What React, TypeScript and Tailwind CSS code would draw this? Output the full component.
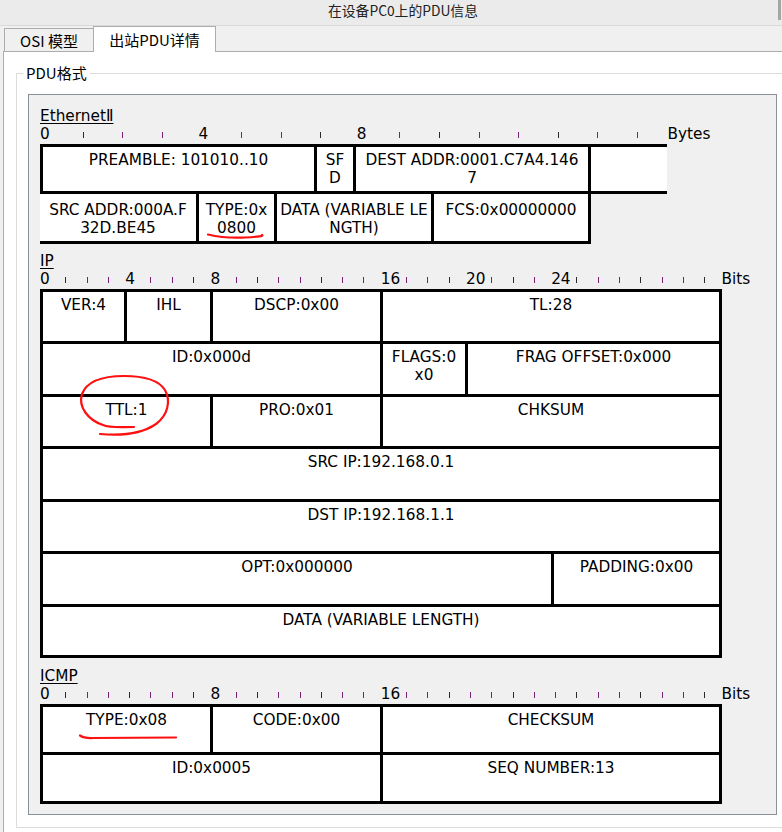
type Cell = { w: string; lines: string[] };
type Row = { h: string; cells: Cell[] };

const ethRow1: Cell[] = [
  { w: 'w-[277px] border-l-[3px] border-r-[3px]', lines: ['PREAMBLE: 101010..10'] },
  { w: 'w-[39px] border-r-[3px]', lines: ['SF', 'D'] },
  { w: 'w-[235px] border-r-[3px]', lines: ['DEST ADDR:0001.C7A4.146', '7'] },
  { w: 'w-[76px]', lines: [] },
];

const ethRow2: Cell[] = [
  { w: 'w-[159px]', lines: ['SRC ADDR:000A.F', '32D.BE45'] },
  { w: 'w-[78px]', lines: ['TYPE:0x', '0800'] },
  { w: 'w-[157px]', lines: ['DATA (VARIABLE LE', 'NGTH)'] },
  { w: 'w-[157px]', lines: ['FCS:0x00000000'] },
];

const ipRows: Row[] = [
  {
    h: 'h-[52px]',
    cells: [
      { w: 'w-[84px]', lines: ['VER:4'] },
      { w: 'w-[86px]', lines: ['IHL'] },
      { w: 'w-[170px]', lines: ['DSCP:0x00'] },
      { w: 'w-[339px]', lines: ['TL:28'] },
    ],
  },
  {
    h: 'h-[53px]',
    cells: [
      { w: 'w-[340px]', lines: ['ID:0x000d'] },
      { w: 'w-[85px]', lines: ['FLAGS:0', 'x0'] },
      { w: 'w-[254px]', lines: ['FRAG OFFSET:0x000'] },
    ],
  },
  {
    h: 'h-[52px]',
    cells: [
      { w: 'w-[170px]', lines: ['TTL:1'] },
      { w: 'w-[170px]', lines: ['PRO:0x01'] },
      { w: 'w-[339px]', lines: ['CHKSUM'] },
    ],
  },
  { h: 'h-[53px]', cells: [{ w: 'w-[679px]', lines: ['SRC IP:192.168.0.1'] }] },
  { h: 'h-[52px]', cells: [{ w: 'w-[679px]', lines: ['DST IP:192.168.1.1'] }] },
  {
    h: 'h-[53px]',
    cells: [
      { w: 'w-[511px]', lines: ['OPT:0x000000'] },
      { w: 'w-[168px]', lines: ['PADDING:0x00'] },
    ],
  },
  { h: 'h-[51px]', cells: [{ w: 'w-[679px]', lines: ['DATA (VARIABLE LENGTH)'] }] },
];

const icmpRows: Row[] = [
  {
    h: 'h-[48px]',
    cells: [
      { w: 'w-[170px]', lines: ['TYPE:0x08'] },
      { w: 'w-[170px]', lines: ['CODE:0x00'] },
      { w: 'w-[339px]', lines: ['CHECKSUM'] },
    ],
  },
  {
    h: 'h-[49px]',
    cells: [
      { w: 'w-[340px]', lines: ['ID:0x0005'] },
      { w: 'w-[339px]', lines: ['SEQ NUMBER:13'] },
    ],
  },
];

function Lines({ lines }: { lines: string[] }) {
  return (
    <>
      {lines.map((l, i) => (
        <div key={i} className="whitespace-nowrap">
          {l}
        </div>
      ))}
    </>
  );
}

function Ruler({
  count,
  cellW,
  tickPad,
  labels,
  unit,
  unitShift = '',
}: {
  count: number;
  cellW: string;
  tickPad: string;
  labels: Record<number, string>;
  unit: string;
  unitShift?: string;
}) {
  return (
    <div className="flex h-[19px] leading-[18px]">
      {Array.from({ length: count }).map((_, i) => (
        <div key={i} className={`${cellW} flex shrink-0 items-end pb-[6px]`}>
          {labels[i] !== undefined ? (
            <span className="self-start whitespace-nowrap">{labels[i]}</span>
          ) : (
            <span className={tickPad}>
              <span
                className={`block h-[6px] w-px ${i % 3 === 1 ? 'bg-[#2a2a2a]' : 'bg-[#7a1f7a]'}`}
              />
            </span>
          )}
        </div>
      ))}
      <span className={`whitespace-nowrap ${unitShift}`}>{unit}</span>
    </div>
  );
}

function Table({ rows }: { rows: Row[] }) {
  return (
    <div className="w-[682px] border-l-[3px] border-t-[3px] border-black bg-white">
      {rows.map((row, r) => (
        <div key={r} className={`flex ${row.h}`}>
          {row.cells.map((c, i) => (
            <div
              key={i}
              className={`${c.w} shrink-0 border-b-[3px] border-r-[3px] border-black pt-[4px] text-center`}
            >
              <Lines lines={c.lines} />
            </div>
          ))}
        </div>
      ))}
    </div>
  );
}

function SectionLabel({ text }: { text: string }) {
  return (
    <div className="h-[18px] leading-[18px]">
      <span className="underline decoration-1 underline-offset-[2px]">{text}</span>
    </div>
  );
}

export default function App() {
  return (
    <div className="relative h-[832px] w-[782px] overflow-hidden bg-[#f0f0f0] text-black">
      {/* Title bar */}
      <div className="flex h-[26px] justify-center border-b border-[#d9d9d9] bg-[#ebebeb] pl-[24px] font-['Noto_Sans_CJK_SC',sans-serif] text-[13.8px] leading-[20px] text-[#222]">
        <span>在设备PC0上的PDU信息</span>
      </div>
      <div className="absolute right-[1px] top-0 h-[20px] w-[3px] bg-[#a6a6a6]" />

      {/* Tabs */}
      <div className="flex h-[25px] items-end pl-[4px] font-['Noto_Sans_CJK_SC',sans-serif] text-[15px] leading-[18px]">
        <div className="flex h-[23px] w-[90px] items-center justify-center border border-b-0 border-[#adadad] bg-[#f0f0f0] pt-[1px]">
          OSI 模型
        </div>
        <div className="relative z-10 -mb-px -ml-px flex h-[26px] w-[123px] items-center justify-center border border-b-0 border-[#adadad] bg-white">
          出站PDU详情
        </div>
      </div>

      {/* Panel */}
      <div className="ml-[3px] h-[781px] border-l border-t border-[#adadad] bg-white">
        <div className="relative ml-[12px] mt-[21px] h-[755px] border border-r-0 border-[#dcdcdc]">
          <div className="absolute -top-[10px] left-[6px] bg-white px-[3px] font-['Noto_Sans_CJK_SC',sans-serif] text-[15px] leading-[18px]">
            PDU格式
          </div>

          <div className="ml-[11px] mt-[20px] h-[721px] w-[749px] border border-[#8a9097] bg-[#f0f0f0] pl-[11px] pt-[12px] font-['DejaVu_Sans',sans-serif] text-[15.3px] leading-[18px]">
            {/* Ethernet II */}
            <SectionLabel text="EthernetⅡ" />
            <Ruler
              count={16}
              cellW="w-[39.6px]"
              tickPad="pl-[3px]"
              labels={{ 0: '0', 4: '4', 8: '8' }}
              unit="Bytes"
              unitShift="-ml-[6px]"
            />
            <div className="flex h-[50px] w-[627px] border-y-[3px] border-black bg-white">
              {ethRow1.map((c, i) => (
                <div key={i} className={`${c.w} shrink-0 border-black pt-[4px] text-center`}>
                  <Lines lines={c.lines} />
                </div>
              ))}
            </div>
            <div className="flex h-[50px] w-[551px] border-b-[3px] border-black bg-white">
              {ethRow2.map((c, i) => (
                <div
                  key={i}
                  className={`${c.w} shrink-0 border-r-[3px] border-black pt-[7px] text-center`}
                >
                  <Lines lines={c.lines} />
                </div>
              ))}
            </div>

            {/* IP */}
            <div className="mt-[8px]">
              <SectionLabel text="IP" />
              <Ruler
                count={32}
                cellW="w-[21.3px]"
                tickPad="pl-[4px]"
                labels={{ 0: '0', 4: '4', 8: '8', 16: '16', 20: '20', 24: '24' }}
                unit="Bits"
              />
              <Table rows={ipRows} />
            </div>

            {/* ICMP */}
            <div className="mt-[9px]">
              <SectionLabel text="ICMP" />
              <Ruler
                count={32}
                cellW="w-[21.3px]"
                tickPad="pl-[4px]"
                labels={{ 0: '0', 8: '8', 16: '16' }}
                unit="Bits"
              />
              <Table rows={icmpRows} />
            </div>
          </div>
        </div>
      </div>

      {/* Red pen marks */}
      <svg
        className="pointer-events-none absolute left-0 top-0"
        width="782"
        height="832"
        viewBox="0 0 782 832"
        fill="none"
        stroke="#ff1010"
        strokeWidth="2.2"
        strokeLinecap="round"
      >
        <path d="M208 234.5 Q 225 238.5 245 237.5 T 262 235" />
        <path d="M80 735.5 Q 84 738.5 93 738 L 176 737.5" />
        <path d="M100 434 C 122 436, 143 433, 156 424 C 168 415, 171 401, 165 390 C 158 379, 142 376, 124 376 C 104 376, 87 381, 82 394 C 78 407, 88 420, 103 425 C 110 428, 118 427, 134 427" />
      </svg>
    </div>
  );
}
